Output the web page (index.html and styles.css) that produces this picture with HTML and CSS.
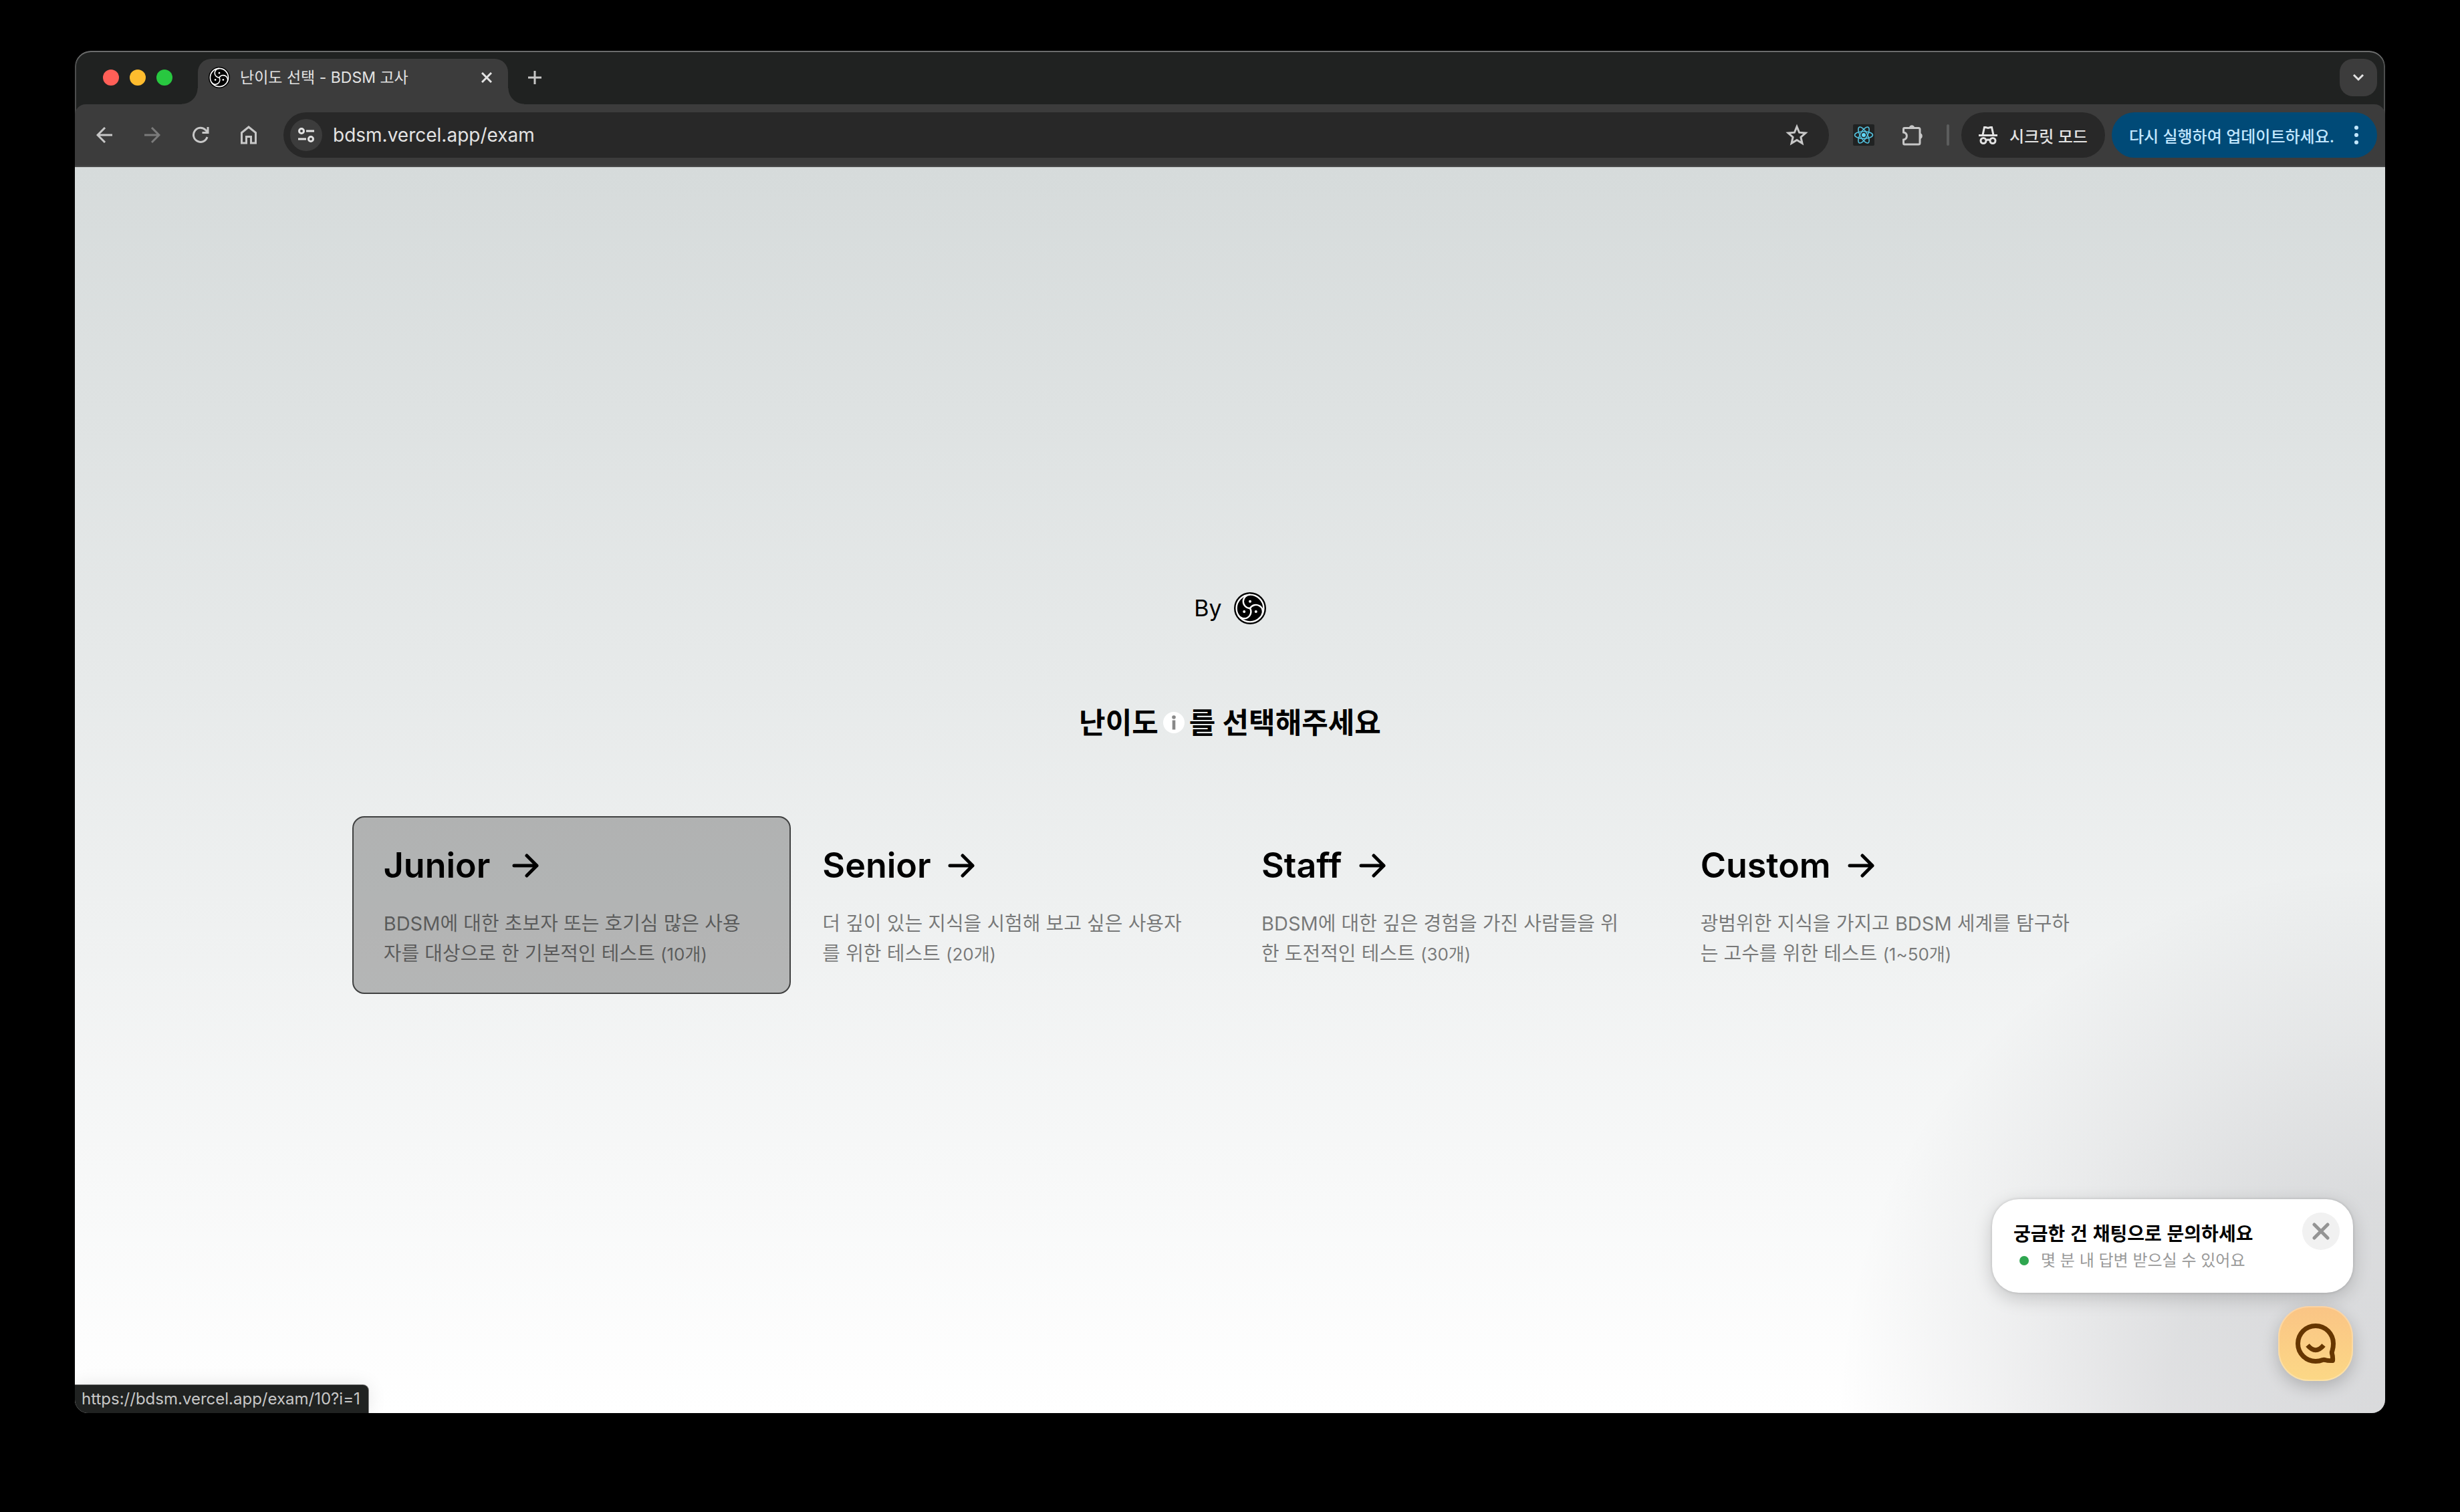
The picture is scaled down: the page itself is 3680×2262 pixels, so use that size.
FILE: index.html
```html
<!DOCTYPE html>
<html lang="ko">
<head>
<meta charset="utf-8">
<title>난이도 선택 - BDSM 고사</title>
<link rel="stylesheet" href="styles.css">
</head>
<body>
<svg class="defs" aria-hidden="true">
  <symbol id="emblem" viewBox="0 0 48 48">
    <circle cx="24" cy="24" r="24" fill="#000"/>
    <g fill="none" stroke="#fff" stroke-width="2.4">
      <circle cx="24" cy="24" r="20.4"/>
      <path d="M24 24A10.2 10.2 0 0 1 24 3.600"/>
      <path d="M24 24A10.2 10.2 0 0 1 24 3.600" transform="rotate(120 24 24)"/>
      <path d="M24 24A10.2 10.2 0 0 1 24 3.600" transform="rotate(240 24 24)"/>
    </g>
    <g fill="#fff"><circle cx="24" cy="13.800" r="2"/><circle cx="15.200" cy="29.100" r="2"/><circle cx="32.800" cy="29.100" r="2"/></g>
  </symbol>
  <symbol id="arrow" viewBox="0 0 40 40">
    <path d="M3 20H37M22 5L37 20L22 35" fill="none" stroke="currentColor" stroke-width="5" stroke-linecap="round" stroke-linejoin="round"/>
  </symbol>
</svg>

<div class="window">
  <header class="chrome">
    <div class="tabstrip">
      <div class="lights"><span class="light red"></span><span class="light yellow"></span><span class="light green"></span></div>
      <div class="tab">
        <svg class="favicon"><use href="#emblem"/></svg>
        <span class="tab-title">난이도 선택 - BDSM 고사</span>
        <button class="icon-button" aria-label="탭 닫기"><svg width="16" height="16" viewBox="0 0 16 16"><path d="M1 1L15 15M15 1L1 15" stroke="#e3e3e3" stroke-width="3"/></svg></button>
      </div>
      <button class="icon-button new-tab" aria-label="새 탭"><svg width="20" height="20" viewBox="0 0 20 20"><path d="M10 0V20M0 10H20" stroke="#c7c7c7" stroke-width="3"/></svg></button>
      <button class="icon-button tab-search" aria-label="탭 검색"><svg width="18" height="12" viewBox="0 0 18 12"><path d="M2 2L9 9L16 2" fill="none" stroke="#e3e3e3" stroke-width="3"/></svg></button>
    </div>
    <div class="toolbar">
      <nav class="nav">
        <button class="icon-button" aria-label="뒤로"><svg width="24" height="24" viewBox="0 0 24 24"><path d="M24 12H2M13 1L2 12L13 23" fill="none" stroke="#c7c7c7" stroke-width="3"/></svg></button>
        <button class="icon-button" aria-label="앞으로" disabled><svg width="24" height="24" viewBox="0 0 24 24"><path d="M0 12H22M11 1L22 12L11 23" fill="none" stroke="#7b7b7b" stroke-width="3"/></svg></button>
        <button class="icon-button" aria-label="새로고침"><svg width="26" height="26" viewBox="0 0 26 26"><path d="M23 16A10.500 10.500 0 1 1 20.500 5.500L23 8M24 1V9.500H15.500" fill="none" stroke="#c7c7c7" stroke-width="3"/></svg></button>
        <button class="icon-button" aria-label="홈"><svg width="26" height="28" viewBox="0 0 26 28"><path d="M2.500 10.500L13 2L23.500 10.500V26H16.500V16.500H9.500V26H2.500Z" fill="none" stroke="#c7c7c7" stroke-width="3"/></svg></button>
      </nav>
      <div class="omnibox">
        <button class="site-info" aria-label="사이트 정보"><svg width="24" height="24" viewBox="0 0 24 24" fill="none" stroke="#e3e3e3" stroke-width="3"><circle cx="5" cy="6" r="3.500"/><path d="M12 6H24M0 18H12"/><circle cx="19" cy="18" r="3.500"/></svg></button>
        <input class="url" type="text" aria-label="주소창" value="bdsm.vercel.app/exam">
        <button class="icon-button" aria-label="북마크"><svg width="34" height="34" viewBox="0 0 34 34"><path d="M17 4.500L20.600 13.200L30 14L22.900 20.200L25 29.300L17 24.500L9 29.300L11.100 20.200L4 14L13.400 13.200Z" fill="none" stroke="#c7c7c7" stroke-width="3"/></svg></button>
      </div>
      <div class="extensions">
        <button class="icon-button" aria-label="React Developer Tools"><svg width="32" height="32" viewBox="0 0 32 32"><rect width="32" height="32" rx="2" fill="#202222"/><circle cx="16" cy="16" r="3" fill="#61dafb"/><g fill="none" stroke="#53c1de" stroke-width="1.600"><ellipse cx="16" cy="16" rx="13.500" ry="5.200"/><ellipse cx="16" cy="16" rx="13.500" ry="5.200" transform="rotate(60 16 16)"/><ellipse cx="16" cy="16" rx="13.500" ry="5.200" transform="rotate(120 16 16)"/></g></svg></button>
        <button class="icon-button" aria-label="확장 프로그램"><svg width="34" height="34" viewBox="0 0 34 34"><path d="M3.500 8Q3.500 6.500 5 6.500H26Q28 6.500 28 8.500V29Q28 31 26 31H5Q3.500 31 3.500 29V24C10 23 10 14 3.500 13Z" fill="none" stroke="#c7c7c7" stroke-width="3"/><path d="M12 6C12 1 20 1 20 6ZM28 14C33 14 33 23 28 23Z" fill="#c7c7c7"/></svg></button>
        <span class="divider"></span>
      </div>
      <button class="pill incognito"><svg width="28" height="28" viewBox="0 0 28 28" fill="none" stroke="#e3e3e3" stroke-width="3"><path d="M0 14.500H28M6 14L8.500 2.500H10.500L14 3.500L17.500 2.500H19.500L22 14"/><circle cx="7" cy="22.500" r="4"/><circle cx="21" cy="22.500" r="4"/><path d="M11 22Q14 20 17 22"/></svg>시크릿 모드</button>
      <button class="pill update">다시 실행하여 업데이트하세요.<svg width="6" height="28" viewBox="0 0 6 28" fill="#c2e7ff"><circle cx="3" cy="3" r="3"/><circle cx="3" cy="14" r="3"/><circle cx="3" cy="25" r="3"/></svg></button>
    </div>
  </header>

  <main class="page">
    <p class="byline">By<svg class="logo" role="img" aria-label="로고"><use href="#emblem"/></svg></p>
    <h1 class="question">난이도<svg class="info" viewBox="0 0 32 32" role="img" aria-label="안내"><circle cx="16" cy="16" r="16" fill="#fff"/><circle cx="16" cy="8" r="2.800" fill="#888"/><path d="M16 12.500V26.500" stroke="#888" stroke-width="4.600"/></svg>를 선택해주세요</h1>
    <div class="levels">
      <a class="level active" href="#junior"><h2>Junior<svg class="arrow"><use href="#arrow"/></svg></h2><p>BDSM에 대한 초보자 또는 호기심 많은 사용자를 대상으로 한 기본적인 테스트 <small>(10개)</small></p></a>
      <a class="level" href="#senior"><h2>Senior<svg class="arrow"><use href="#arrow"/></svg></h2><p>더 깊이 있는 지식을 시험해 보고 싶은 사용자를 위한 테스트 <small>(20개)</small></p></a>
      <a class="level" href="#staff"><h2>Staff<svg class="arrow"><use href="#arrow"/></svg></h2><p>BDSM에 대한 깊은 경험을 가진 사람들을 위한 도전적인 테스트 <small>(30개)</small></p></a>
      <a class="level" href="#custom"><h2>Custom<svg class="arrow"><use href="#arrow"/></svg></h2><p>광범위한 지식을 가지고 BDSM 세계를 탐구하는 고수를 위한 테스트 <small>(1~50개)</small></p></a>
    </div>

    <div class="status">https://bdsm.vercel.app/exam/10?i=1</div>

    <aside class="chat">
      <div class="bubble">
        <div class="bubble-text">
          <strong>궁금한 건 채팅으로 문의하세요</strong>
          <span class="reply"><span class="dot"></span>몇 분 내 답변 받으실 수 있어요</span>
        </div>
        <button class="dismiss" aria-label="닫기"><svg width="26" height="26" viewBox="0 0 26 26"><path d="M3 3L23 23M23 3L3 23" stroke="#949494" stroke-width="5" stroke-linecap="round"/></svg></button>
      </div>
      <button class="launcher" aria-label="채팅 열기"><svg width="60" height="60" viewBox="0 0 60 60" fill="none" stroke="#663600" stroke-width="7" stroke-linejoin="round"><path d="M30 3.500A26.500 26.500 0 1 0 30 56.500Q36 56.500 40.500 54.500Q42 54 44 54.500Q49 56 55.500 55.500Q56 50 54.500 45Q54 43 55 40.500Q56.500 35 56.500 30A26.500 26.500 0 0 0 30 3.500Z"/><path d="M18 32.500Q30 47 42 32.500" stroke-width="7"/></svg></button>
    </aside>
  </main>
</div>
</body>
</html>
```
FILE: styles.css
```css
* { box-sizing: border-box; }
body {
  margin: 0;
  min-height: 100vh;
  padding: 76px 112px 148px;
  display: flex;
  background: #000;
  font-family: Inter, "Noto Sans CJK KR", sans-serif;
  color: #000;
}
.defs { position: absolute; width: 0; height: 0; }
button { border: 0; padding: 0; background: none; font: inherit; color: inherit; }
button svg { display: block; }
.icon-button { display: flex; align-items: center; justify-content: center; width: 40px; height: 40px; flex: none; }

.window {
  flex: 1;
  display: flex;
  flex-direction: column;
  border-radius: 24px 24px 20px 20px;
  overflow: hidden;
}

/* browser chrome */
.chrome {
  background: #202221;
  border-radius: 24px 24px 0 0;
  box-shadow: inset 0 2px 0 #6b6c6c, inset 0 0 0 2px #4c4d4d;
  color: #e3e3e3;
}
.tabstrip { display: flex; align-items: center; height: 80px; padding: 0 12px 0 42px; }
.lights { display: flex; gap: 16px; width: 142px; }
.light { width: 24px; height: 24px; border-radius: 50%; }
.red { background: #ff5f57; }
.yellow { background: #febc2e; }
.green { background: #28c840; }
.tab {
  position: relative;
  align-self: flex-end;
  display: flex;
  align-items: center;
  width: 464px;
  height: 68px;
  padding: 0 12px 12px 16px;
  border-radius: 20px 20px 0 0;
  background: #3c3c3c;
}
.tab::before, .tab::after { content: ""; position: absolute; bottom: 0; width: 24px; height: 24px; }
.tab::before { right: 100%; background: radial-gradient(circle at 0 0, transparent 23px, #3c3c3c 24px); }
.tab::after { left: 100%; background: radial-gradient(circle at 100% 0, transparent 23px, #3c3c3c 24px); }
.favicon { width: 32px; height: 32px; margin-right: 15px; }
.tab-title { flex: 1; font-size: 23px; line-height: 32px; }
.new-tab { margin-left: 20px; }
.tab-search { width: 56px; height: 56px; margin-left: auto; border-radius: 20px; background: #3c3c3c; }
.toolbar {
  display: flex;
  align-items: center;
  height: 94px;
  padding: 0 12px 0 24px;
  border-radius: 16px 16px 0 0;
  border-bottom: 2px solid #4a4b4b;
  background: #3c3c3c;
}
.nav { display: flex; gap: 32px; }
.omnibox {
  flex: 1;
  display: flex;
  align-items: center;
  height: 68px;
  margin-left: 32px;
  padding: 0 28px 0 10px;
  border-radius: 34px;
  background: #282828;
}
.site-info { width: 48px; height: 48px; display: flex; align-items: center; justify-content: center; border-radius: 50%; background: #3c3c3c; flex: none; }
.url {
  flex: 1;
  min-width: 0;
  height: 48px;
  margin-left: 16px;
  padding: 0;
  border: 0;
  outline: 0;
  background: none;
  font: 28px Inter, sans-serif;
  color: #e3e3e3;
}
.extensions { display: flex; align-items: center; padding-left: 32px; }
.extensions .icon-button + .icon-button { margin-left: 33px; }
.divider { width: 4px; height: 32px; margin: 0 18px 0 31px; border-radius: 2px; background: #5c5d5d; }
.pill { display: flex; align-items: center; height: 68px; border-radius: 34px; font-size: 24px; font-weight: 500; white-space: nowrap; }
.incognito { gap: 18px; padding: 0 26px; background: #282828; color: #e3e3e3; }
.update { gap: 30px; margin-left: 10px; padding: 0 28px 0 26px; background: #004a77; color: #c2e7ff; }

/* exam page */
.page {
  position: relative;
  flex: 1;
  display: flex;
  flex-direction: column;
  align-items: center;
  justify-content: center;
  background:
    radial-gradient(circle 820px at 100% 100%, rgba(20, 24, 36, .16), rgba(20, 24, 36, .13) 40%, rgba(20, 24, 36, .06) 70%, transparent),
    linear-gradient(#d6dbdb, #fff);
}
.byline { display: flex; align-items: center; gap: 18px; margin: 0; font-size: 34px; line-height: 64px; }
.logo { width: 48px; height: 48px; }
.question { display: flex; align-items: center; margin: 107px 0 108px; font-size: 43px; font-weight: 700; line-height: 64px; }
.info { width: 32px; height: 32px; margin: 0 7px; }
.levels { display: grid; grid-template-columns: repeat(4, 1fr); width: 76%; }
.level { padding: 34px 52px 36px 45px; border: 2px solid transparent; border-radius: 18px; color: inherit; text-decoration: none; }
.level.active { border-color: #404141; background: rgba(0, 0, 0, .25); }
.level h2 { display: flex; align-items: center; gap: 25px; margin: 0 0 26px; font-size: 52px; font-weight: 600; line-height: 76px; }
.level.active h2 { gap: 33px; }
.arrow { width: 40px; height: 40px; }
.level p { margin: 0; font-size: 29px; line-height: 45px; word-break: break-all; color: rgba(0, 0, 0, .5); }
.level small { font-size: 26px; line-height: 32px; }

.status {
  position: absolute;
  left: 0;
  bottom: 0;
  height: 42px;
  padding: 0 12px 0 10px;
  border-radius: 0 8px 0 0;
  background: #202221;
  box-shadow: 0 0 0 1px #8a8a8a, 0 0 28px rgba(0, 0, 0, .1);
  font-size: 24px;
  line-height: 42px;
  color: #c7c7c7;
}

.chat { position: absolute; right: 48px; bottom: 48px; display: flex; flex-direction: column; align-items: flex-end; gap: 20px; }
.bubble {
  display: flex;
  width: 540px;
  height: 140px;
  padding: 20px 20px 20px 32px;
  border-radius: 40px;
  background: #fff;
  box-shadow: 0 8px 28px rgba(0, 0, 0, .18), 0 0 4px rgba(0, 0, 0, .16);
}
.bubble-text { flex: 1; display: flex; flex-direction: column; padding-top: 10px; }
.bubble-text strong { font-family: "Noto Sans CJK KR", sans-serif; font-size: 28px; line-height: 40px; }
.reply { display: flex; align-items: center; font-size: 24px; line-height: 44px; color: #999; }
.dot { width: 14px; height: 14px; margin: 0 18px 0 9px; border-radius: 50%; background: #2fa650; }
.dismiss { display: flex; align-items: center; justify-content: center; width: 56px; height: 56px; border-radius: 50%; background: #f1f1f1; }
.launcher {
  display: flex;
  align-items: center;
  justify-content: center;
  width: 112px;
  height: 112px;
  border-radius: 46px;
  background: linear-gradient(#fac485, #fcd886);
  box-shadow: inset 0 0 0 2px rgba(255, 255, 255, .25), 0 8px 24px rgba(0, 0, 0, .2);
}
```
